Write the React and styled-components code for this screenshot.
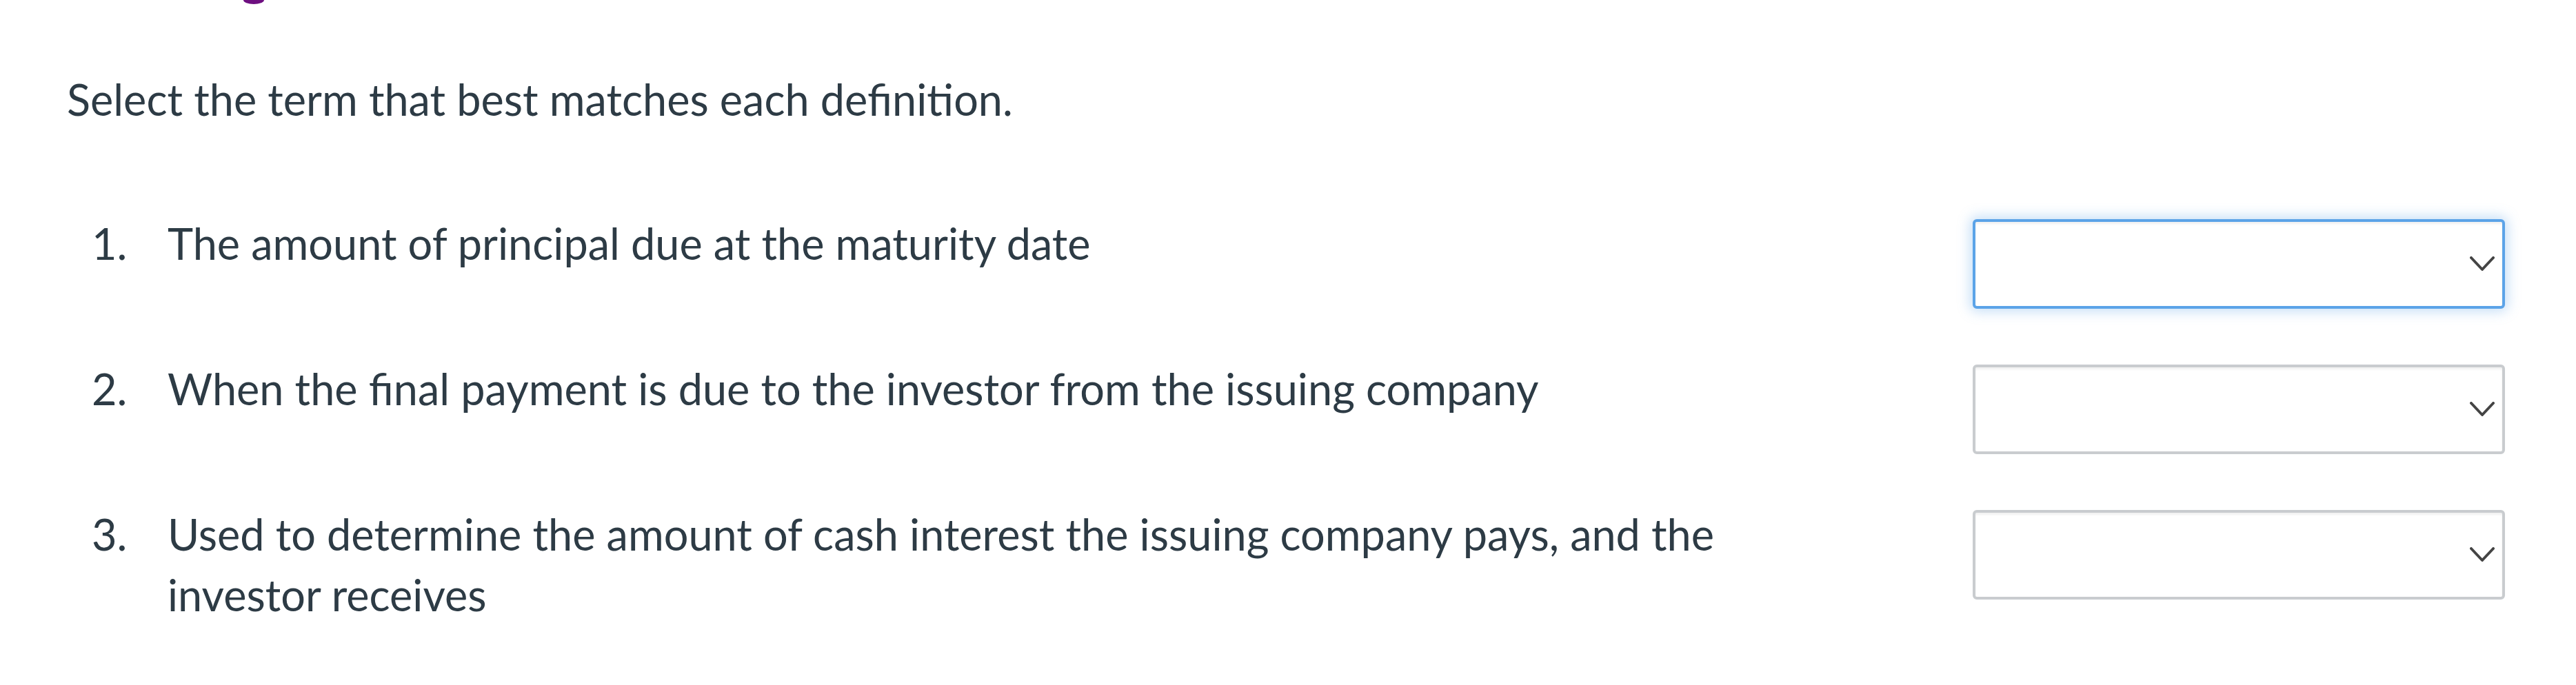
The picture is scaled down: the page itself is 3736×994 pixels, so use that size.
import React from "react";
import styled, { createGlobalStyle } from "styled-components";

const Global = createGlobalStyle`
  html, body { margin: 0; padding: 0; background: #ffffff; }
  body { font-family: Lato, "Noto Sans", "Liberation Sans", sans-serif; color: #2d3b45; }
`;

const Page = styled.div`
  padding: 0 103px 40px 97px;
`;

const HeaderTail = styled.div`
  height: 6px;
  margin-left: 256px;
  width: 30px;
  background: #6e0f80;
  border-radius: 0 0 50% 50% / 0 0 100% 100%;
`;

const Prompt = styled.p`
  margin: 94px 0 0;
  font-size: 63px;
  line-height: 88px;
  font-weight: 400;
`;

const List = styled.ol`
  list-style: none;
  margin: 121px 0 0;
  padding: 0 0 0 36px;
  display: flex;
  flex-direction: column;
  gap: 72px;
`;

const Row = styled.li`
  display: flex;
  align-items: flex-start;
  min-height: 139px;
`;

const Num = styled.span`
  flex: 0 0 110px;
  font-size: 63px;
  line-height: 88px;
`;

const Definition = styled.span`
  flex: 0 1 2360px;
  font-size: 63px;
  line-height: 88px;
`;

const Select = styled.div`
  position: relative;
  margin: 9px 0 0 auto;
  flex: 0 0 772px;
  box-sizing: border-box;
  height: 130px;
  border-radius: 6px;
  background: #ffffff;
  border: 4px solid ${(p) => (p.$focused ? "#5ba3e8" : "#c9cccf")};
  box-shadow: ${(p) =>
    p.$focused
      ? "0 0 18px 4px rgba(91,163,232,0.35), inset 0 3px 3px rgba(0,0,0,0.06)"
      : "inset 0 3px 3px rgba(0,0,0,0.06)"};
`;

const Chevron = styled.svg`
  position: absolute;
  right: 11px;
  top: 50%;
  width: 36px;
  height: 22px;
  transform: translateY(-50%);
`;

const items = [
  "The amount of principal due at the maturity date",
  "When the final payment is due to the investor from the issuing company",
  "Used to determine the amount of cash interest the issuing company pays, and the investor receives",
];

export default function App() {
  return (
    <Page>
      <Global />
      <HeaderTail />
      <Prompt>Select the term that best matches each definition.</Prompt>
      <List>
        {items.map((t, i) => (
          <Row key={i}>
            <Num>{i + 1}.</Num>
            <Definition>{t}</Definition>
            <Select $focused={i === 0} role="combobox" aria-label={`Answer ${i + 1}`}>
              <Chevron viewBox="0 0 36 22" fill="none">
                <path d="M2 2 L18 19 L34 2" stroke="#444" strokeWidth="4" strokeLinecap="round" strokeLinejoin="round" />
              </Chevron>
            </Select>
          </Row>
        ))}
      </List>
    </Page>
  );
}
